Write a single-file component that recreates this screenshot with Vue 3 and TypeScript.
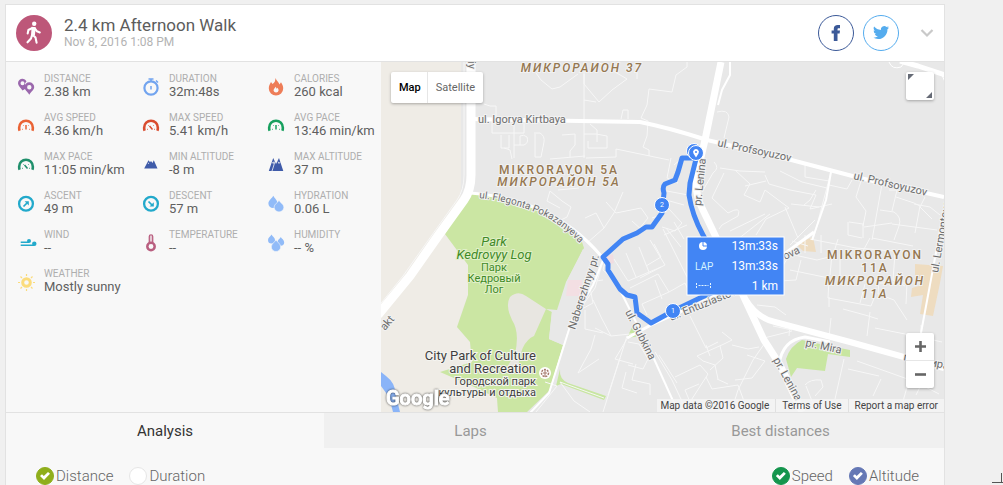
<script setup lang="ts">
import { ref } from 'vue'

interface Stat {
  label: string
  value: string
  icon: string
  color: string
  needle?: string
}

const stats: Stat[] = [
  { label: 'DISTANCE', value: '2.38 km', icon: 'pins', color: '#9b68ad' },
  { label: 'DURATION', value: '32m:48s', icon: 'watch', color: '#72a4ef' },
  { label: 'CALORIES', value: '260 kcal', icon: 'flame', color: '#ee7d58' },
  { label: 'AVG SPEED', value: '4.36 km/h', icon: 'gauge', color: '#ea6335', needle: 'M9 8V12.500' },
  { label: 'MAX SPEED', value: '5.41 km/h', icon: 'gauge', color: '#d94c2f', needle: 'M7.500 9L10.500 12.500' },
  { label: 'AVG PACE', value: '13:46 min/km', icon: 'gauge', color: '#17a05e', needle: 'M9 8V12.500' },
  { label: 'MAX PACE', value: '11:05 min/km', icon: 'gauge', color: '#20906c', needle: 'M7.500 9L10.500 12.500' },
  { label: 'MIN ALTITUDE', value: '-8 m', icon: 'hills', color: '#3f5ba9' },
  { label: 'MAX ALTITUDE', value: '37 m', icon: 'peaks', color: '#3f5ba9' },
  { label: 'ASCENT', value: '49 m', icon: 'up', color: '#22a9cb' },
  { label: 'DESCENT', value: '57 m', icon: 'down', color: '#22a9cb' },
  { label: 'HYDRATION', value: '0.06 L', icon: 'drops', color: '#91bbf8' },
  { label: 'WIND', value: '--', icon: 'wind', color: '#22a9cb' },
  { label: 'TEMPERATURE', value: '--', icon: 'thermo', color: '#b95f80' },
  { label: 'HUMIDITY', value: '-- %', icon: 'humidity', color: '#91bbf8' },
  { label: 'WEATHER', value: 'Mostly sunny', icon: 'sun', color: '#fbdc7c' },
]

const tabs = ['Analysis', 'Laps', 'Best distances']
const activeTab = ref('Analysis')
const mapType = ref('Map')
const axis = ref('distance')
const showSpeed = ref(true)
const showAltitude = ref(true)

const minorRoads = [
  'M484 104L490 106L496 106V119M492 119V133H524V119M501 135V148H509V135M504 148L510 150L512 159M514 121V158M514 145H524Q529 143 527 137Q524 134 520 136V145M534 133H540Q545 136 544 142L541 157H535V134M562 135L575 134V145L570 151V157M550 159L585 156M584 62V158M584 100L596 102',
  'M536 73L541 80L552 89L560 87L578 74M584 74L584 84L599 102L612 90L627 79L598 62M584 134H596M590 124L597 130L597 142M596 134L607 136V148H588V141M586 158L616 157V149L645 155L669 160M637 79V62M687 62V67L676 75L672 92L649 89L647 105L641 118L648 121L647 136L643 147L649 150V156M621 119L623 110L628 110V119',
  'M550 191L562 201L571 207L567 217L559 221M550 191L547 201L560 208M558 190L579 188M585 218L596 213L604 228L614 213L623 192M604 228L587 243M606 202L616 213L641 208L648 218L639 229M632 221L643 231M652 218L661 215L669 209L682 223L675 231L662 227M666 228L681 247M674 222L684 239M671 158L667 178L678 183M667 191L688 195M666 200L684 205M681 159L674 165',
  'M717 112Q728 109 729 117L724 138M714 162Q720 168 713 173L702 192M720 168L740 171L765 172M724 173L712 198L728 213Q742 205 738 216L722 225L719 229M735 170L750 184L744 195L760 202L765 190M745 186L766 181M765 190L789 208L766 219L756 235M730 231L765 214M738 239L770 214M765 175L769 184L790 190L816 195L810 209L832 204M805 165V177L829 181M831 172L813 240M829 185L847 189L852 180M780 171L802 182L827 188M816 190L810 200L804 205M785 207L798 238M791 204L819 207M790 245L815 220',
  'M861 181L856 197L866 211L863 226M882 184L872 240M880 210L894 212Q902 217 899 226L894 240M849 222L863 224V238M848 222V235L862 238M889 190H897L892 211M896 197L914 203L920 206L915 233M914 204L930 207L940 215M892 224L937 230M864 227L892 223M872 238L913 246M925 197L920 207L932 219',
  'M605 265L623 292M614 259L628 281L661 267M626 253L636 277M639 247L649 272M650 240L665 265L640 278M663 229L690 283M630 288L658 274L669 292L642 304M669 292L685 283L690 294M655 280L662 299M642 304L647 315M664 235L687 225M646 266L661 257L654 244M690 316L706 348L718 342M697 356L724 344L732 340L722 332M706 345L710 356M697 356L703 361L715 365L718 379M732 345L748 349L759 347M720 346L723 358L710 370',
  'M627 336L603 412M627 339L615 359L633 364M620 358L608 395M628 342L639 344L648 359L643 369L628 365M626 372L622 388L637 393M636 364L632 380L650 384L650 395M655 352L672 380L687 412M659 355L677 383M675 377L700 365L708 374L690 402L722 411M690 402L685 390L699 384M706 377L712 389L738 385L748 412M717 379L728 384',
  'M604 258L595 288L571 322L550 390M606 258L603 270L614 280M593 300L602 319L611 336L595 328M595 335L591 349L578 373M611 336L640 333M578 373L599 359M580 310L593 303L589 282L603 280M585 310V329L603 333M560 382L604 398M557 386L536 412M545 382L557 386M560 382L574 401L590 412',
  'M773 326L792 330M766 347L764 338L792 331M767 340L753 360L738 390L731 412M747 355L765 361L752 378L735 380M790 270L829 278L828 298L871 306L875 296M832 254L830 275M858 280L879 280L878 294L894 300L907 320M880 283L907 283L906 304M790 254L817 260L833 256M840 254V278M790 325L789 336M780 281L796 280L801 260M829 297L829 307M831 318L829 337M870 312L867 336M843 309L865 315L878 319M857 361L916 382L939 394M844 359L835 399M848 369L879 376M805 385Q810 379 821 380L823 387L815 396M806 386L814 406L822 411M881 379L873 396M921 385L916 395M909 380L900 412M921 325L921 335M875 328L920 337L942 342',
  'M757 305L775 307L786 315M781 269L790 254M805 253V235M821 253V235M834 252L838 239M863 251L870 238M810 239L856 248L894 251M895 253L893 280L905 286M865 284L860 303M792 241L808 246',
]
</script>

<template>
  <main class="page">
    <article class="card">
      <header class="head">
        <div class="avatar">
          <svg width="36" height="36" viewBox="0 0 36 36" aria-hidden="true">
            <circle cx="18.200" cy="8.800" r="2.200" fill="#fff" />
            <path d="M17.600 13L16.400 19.500L19.500 22.500L20.600 27.600M16.200 19.500L15 23.500L11.500 27.300M16.500 13L12.400 15L11.700 18.400M18.800 13.500L21 16.300L23.800 17.400" fill="none" stroke="#fff" stroke-width="2.100" stroke-linecap="round" stroke-linejoin="round" />
            <path d="M15.500 11.700L19.800 12.300L18.900 20.300L15.200 20Z" fill="#fff" />
          </svg>
        </div>
        <div class="heading">
          <h1>2.4 km Afternoon Walk</h1>
          <p>Nov 8, 2016 1:08 PM</p>
        </div>
        <div class="share">
          <a href="#facebook" class="round facebook" aria-label="Share on Facebook">
            <svg width="34" height="34" viewBox="0 0 34 34"><path d="M14.800 25V17.600H12.600V14.400H14.800V12.700C14.800 10.200 16.300 9 18.700 9H21V12.200H19.600C18.800 12.200 18.500 12.600 18.500 13.400V14.400H21L20.600 17.600H18.500V25Z" fill="#3b5998" /></svg>
          </a>
          <a href="#twitter" class="round twitter" aria-label="Share on Twitter">
            <svg width="34" height="34" viewBox="0 0 34 34"><path transform="translate(9 8.500) scale(.67)" d="M23.950 4.570a10 10 0 0 1-2.820.77 4.960 4.960 0 0 0 2.160-2.720c-.95.550-2 .95-3.130 1.180a4.920 4.920 0 0 0-8.380 4.480C7.690 8.090 4.070 6.130 1.640 3.160a4.820 4.820 0 0 0-.67 2.480c0 1.710.87 3.210 2.190 4.100a4.900 4.900 0 0 1-2.230-.62v.06a4.920 4.920 0 0 0 3.950 4.830 5 5 0 0 1-2.210.08 4.940 4.940 0 0 0 4.600 3.420A9.870 9.870 0 0 1 0 19.540a14 14 0 0 0 7.550 2.210c9.050 0 14-7.500 14-13.980 0-.21 0-.42-.02-.63a9.940 9.940 0 0 0 2.460-2.550z" fill="#55acee" /></svg>
          </a>
          <button class="more" aria-label="More options">
            <svg width="14" height="10" viewBox="0 0 14 10"><path d="M1.500 2L7 7.500L12.500 2" fill="none" stroke="#c9c9c9" stroke-width="2.200" /></svg>
          </button>
        </div>
      </header>

      <div class="summary">
        <dl class="stats">
          <div v-for="s in stats" :key="s.label" class="stat">
            <svg class="icon" viewBox="0 0 18 18" aria-hidden="true" :fill="s.color" :stroke="s.color">
              <g v-if="s.icon === 'pins'" stroke="none">
                <path fill-rule="evenodd" d="M5.700 .7A4.500 4.500 0 0 0 1 5.300C1 8 3.500 9.500 5.500 12.500L8 11V5.500L9.500 3.200A4.500 4.500 0 0 0 5.700 .7ZM5.500 3.200A2 2 0 1 1 5.500 7.200A2 2 0 1 1 5.500 3.200Z" />
                <path fill-rule="evenodd" d="M12.300 4.200A4.900 4.900 0 0 0 7.400 9.100C7.400 12 10.300 13.500 12.300 16.700C14.300 13.500 17.200 12 17.200 9.100A4.900 4.900 0 0 0 12.300 4.200ZM12.300 7A2.200 2.200 0 1 1 12.300 11.400A2.200 2.200 0 1 1 12.300 7Z" />
              </g>
              <g v-else-if="s.icon === 'watch'" fill="none">
                <circle cx="9" cy="10" r="6.600" stroke-width="2.200" />
                <path d="M6.500 1H11.500M9 1V3.500M14 2.500L16 4.500M9 8V11.500" stroke-width="1.500" />
              </g>
              <path v-else-if="s.icon === 'flame'" stroke="none" fill-rule="evenodd" d="M8.500 0C9.500 3 12 4.200 12.500 6.500L14 4.200C15.500 6.500 16.300 8.500 16.200 10.500A7.200 7 0 0 1 1.800 10.500C1.600 8 3 6 4 4L5.500 6C8 4.500 8.300 2.500 8.500 0ZM8.800 8.800C8.200 10 6.400 10.800 6.600 12.800A2.600 2.600 0 0 0 11.600 12.600C11.600 11 10.800 10.600 10.300 9.800Q9.800 11 9.500 10.500Z" />
              <g v-else-if="s.icon === 'gauge'" fill="none">
                <path d="M2.600 13.800A7 7 0 0 1 2.200 10.500A6.800 6.800 0 0 1 15.800 10.500A7 7 0 0 1 15.400 13.800" stroke-width="2.600" />
                <path :d="s.needle" stroke-width="1.500" />
                <path d="M5 12.300H6M12 12.300H13M6 8L6.700 8.700M12 8L11.300 8.700" stroke-width="0.800" />
              </g>
              <path v-else-if="s.icon === 'hills'" stroke="none" d="M2.200 12.500L6.500 4.200L8 6.300L9 5L10.500 7L11.800 4.200L15.500 12.500ZM5.800 7.500L6.500 6.500L7.200 8Z" fill-rule="evenodd" />
              <g v-else-if="s.icon === 'peaks'" stroke="none">
                <path d="M1.800 15L6.200 2L9 8L12 2L16.300 15Z" />
                <path d="M5.200 6.200L6.200 7.500L7 5.700L7.500 7L6 12L5 15M11 5.700L12 7.500L13.200 6" fill="none" stroke="#f8f8f8" stroke-width="0.800" />
              </g>
              <g v-else-if="s.icon === 'up' || s.icon === 'down'">
                <circle cx="9" cy="8.800" r="6.900" fill="none" stroke-width="2.300" />
                <path v-if="s.icon === 'up'" d="M6.500 11.500L10 8" stroke-width="1.700" />
                <path v-if="s.icon === 'up'" d="M7.600 6.300H11.800V10.500Z" stroke="none" />
                <path v-if="s.icon === 'down'" d="M6.500 6.500L10 10" stroke-width="1.700" />
                <path v-if="s.icon === 'down'" d="M11.800 7.300V11.600H7.500Z" stroke="none" />
              </g>
              <g v-else-if="s.icon === 'drops'" stroke="none">
                <path d="M6.300 .7C7.200 2.800 10.600 5.200 10.600 8.500A4.600 4.600 0 0 1 1.400 8.500C1.400 5.200 5.400 2.800 6.300 .7Z" />
                <path d="M12 5.200C13 7.600 16.900 9 16.900 12.200A4.900 4.700 0 0 1 7.100 12.200C7.100 9 11 7.600 12 5.200Z" stroke="#f8f8f8" stroke-width="0.600" />
              </g>
              <g v-else-if="s.icon === 'wind'">
                <path d="M3.700 8.200H12M3.700 11.200H17" stroke-width="1.600" fill="none" />
                <circle cx="12" cy="7" r="2" stroke="none" />
                <circle cx="17.300" cy="9.700" r="2.200" stroke="none" />
              </g>
              <g v-else-if="s.icon === 'thermo'" fill="none">
                <path d="M7.300 8.500V2.500A1.700 1.700 0 0 1 10.700 2.500V8.500" stroke-width="1.300" />
                <path d="M9 2V9" stroke-width="1" opacity=".6" />
                <circle cx="9" cy="12.500" r="3.700" stroke-width="2.500" />
              </g>
              <g v-else-if="s.icon === 'humidity'" stroke="none">
                <path d="M4.500 .5C5.200 2.200 8 3.500 8 6A3.500 3.500 0 0 1 1 6C1 3.500 3.800 2.200 4.500 .5ZM13.800 3C14.500 4.500 17.200 6 17.200 8.300A3.400 3.400 0 0 1 10.400 8.300C10.400 6 13.100 4.500 13.800 3Z" />
                <path d="M9 5.800C10 8 13.700 9.800 13.700 12.900A4.700 4.600 0 0 1 4.300 12.900C4.300 9.800 8 8 9 5.800Z" stroke="#f8f8f8" stroke-width="0.600" />
              </g>
              <g v-else fill="none">
                <circle cx="9.500" cy="9.500" r="3.800" stroke-width="3" />
                <path d="M9.500 1V3M9.500 16V18M1 9.500H3M16 9.500H18M3.500 3.500L5 5M14 14L15.500 15.500M15.500 3.500L14 5M5 14L3.500 15.500" stroke-width="1.200" />
              </g>
            </svg>
            <div class="figures">
              <dt>{{ s.label }}</dt>
              <dd>{{ s.value }}</dd>
            </div>
          </div>
        </dl>

        <section class="map" aria-label="Route map">
          <svg class="canvas" viewBox="381 62 563 350" preserveAspectRatio="xMidYMid slice">
            <rect x="381" y="62" width="563" height="350" fill="#e8e8e8" />
            <path d="M381 62H461V185L460 210L445 234L468 265V295L457 327L470 342L472 362L441 372L470 385L497 398L498 412H381Z" fill="#efece6" />
            <path d="M381 372L386 376Q395 383 395 392L400 412H393L389 397L381 386Z" fill="#8ab4f8" />
            <path d="M470 193Q500 196 527 203Q558 215 580 236L584 248L566 282L557 310L546 309L552 312L549 339L563 345L550 390L527 412H498L497 398L470 385L440 372L472 362L470 342L457 327L468 295V265L445 234Z" fill="#cbe6a3" />
            <path d="M546 309L526 296Q518 290 510 297Q505 306 512 320Q520 332 515 354L504 372L518 370Q520 342 534 336Z" fill="#e8e6e1" />
            <path d="M552 310H559L567 281L583 249L600 259L571 320L563 345L549 339Z" fill="#e8e8e8" />
            <path d="M568 280H582V296H566Z" fill="#f3dfe3" />
            <path d="M633 325L636 331L641 336L627 338Z" fill="#c8e6a1" />
            <path d="M560 369Q559 379 568 383L606 396L604 400L561 384L556 386Z" fill="#c8e6a1" />
            <path d="M802 340Q790 346 786 359L791 377L797 368L825 371L828 354L850 357V350L820 344Z" fill="#c8e6a1" />
            <path d="M915 264L943 266L940 283L933 316L920 314L923 295L911 297L912 288L922 285L915 277ZM796 244L813 237L816 252L803 251Z" fill="#eedcc0" />
            <path d="M604 257L613 254L614 263L607 265Z" fill="#f1dde1" />
            <path v-for="(d, i) in minorRoads" :key="i" :d="d" fill="none" stroke="#f7f7f7" stroke-width="1" />
            <g fill="none" stroke="#fff" stroke-linejoin="round">
              <path d="M471 62V175Q471 190 464 200L438 236L410 276L378 315" stroke-width="9" />
              <path d="M470 193Q510 196 540 210Q575 225 602 257" stroke-width="3" />
              <path d="M472 119L580 121L640 122Q670 128 707 140L780 157L860 178L944 197" stroke-width="4" />
              <path d="M721 62L705 140L698 170Q693 190 702 208L727 260Q745 300 764 340L780 365L802 412" stroke-width="7" />
              <path d="M730 62V75L722 90L718 105" stroke-width="2" />
              <path d="M746 300Q757 318 775 322L850 342L944 368" stroke-width="6" />
              <path d="M779 365Q782 340 805 337L830 342M780 363L790 380L797 400" stroke-width="3" />
              <path d="M900 61L918 66L945 75" stroke-width="5" />
              <path d="M889 62Q892 70 901 67L904 63M942 75L945 82" stroke-width="1" />
              <path d="M604 258L650 350L678 412" stroke-width="2" />
              <path d="M627 338L651 325L700 303L755 275Q790 250 814 232" stroke-width="3" />
              <path d="M831 172L826 200L812 240" stroke-width="2" />
              <path d="M943 215L921 333" stroke-width="2" />
              <path d="M604 258L593 285L572 320L549 393L530 413" stroke-width="2" />
            </g>
            <path d="M464 62V175Q464 190 457 200L432 235L403 276L378 307" fill="none" stroke="#f7f7f7" stroke-width="1" />

            <path d="M696 158L682 158L678 172L675 180L665 184Q662 187 664 193L662 213L652 227H646L637 233L623 239L603 257L608 264V270L620 289L627 295L635 297L637 313L651 323L673 311L700 298L730 285L703 235Q692 215 689 195L690 183L696 159" fill="none" stroke="#4285f4" stroke-width="5" stroke-linejoin="round" />

            <g class="street">
              <text x="478" y="123">ul. Igorya Kirtbaya</text>
              <text transform="translate(717 146) rotate(12)">ul. Profsoyuzov</text>
              <text transform="translate(853 179) rotate(13)">ul. Profsoyuzov</text>
              <text transform="translate(701 206) rotate(-84)">pr. Lenina</text>
              <text transform="translate(575 330) rotate(-72)">Naberezhnyy pr.</text>
              <text transform="translate(625 312) rotate(63)">ul. Gubkina</text>
              <text transform="translate(671 321) rotate(-22)">ul. Entuziastov</text>
              <text transform="translate(785 260) rotate(-25)">ova</text>
              <text transform="translate(805 346) rotate(12)">pr. Mira</text>
              <text transform="translate(903 360) rotate(12)">пр. Мира</text>
              <text transform="translate(773 360) rotate(61)">pr. Lenina</text>
              <text transform="translate(385 331) rotate(-50)">akt</text>
              <text transform="translate(938 273) rotate(-80)">ul. Lermontova</text>
              <text transform="translate(468 61) rotate(90)">iy</text>
            </g>
            <path id="flegonta-line" d="M479 198Q514 202 544 216Q566 227 590 254" fill="none" />
            <text class="street small"><textPath href="#flegonta-line">ul. Flegonta Pokazanyeva</textPath></text>

            <g class="district" text-anchor="middle">
              <text x="582" y="72" class="italic">МИКРОРАЙОН 37</text>
              <text x="559" y="174">MIKRORAYON 5A</text>
              <text x="559" y="186" class="italic">МИКРОРАЙОН 5А</text>
              <text x="875" y="259">MIKRORAYON</text>
              <text x="875" y="272">11A</text>
              <text x="875" y="285" class="italic">МИКРОРАЙОН</text>
              <text x="875" y="298" class="italic">11А</text>
            </g>
            <g class="park" text-anchor="middle">
              <text x="494" y="246" class="park-name">Park</text>
              <text x="494" y="259" class="park-name">Kedrovyy Log</text>
              <text x="494" y="271">Парк</text>
              <text x="494" y="282">Кедровый</text>
              <text x="494" y="293">Лог</text>
            </g>
            <g class="place" text-anchor="end">
              <text x="536" y="360">City Park of Culture</text>
              <text x="536" y="373">and Recreation</text>
              <text x="536" y="385" class="local">Городской парк</text>
              <text x="536" y="396" class="local">культуры и отдыха</text>
            </g>
            <circle cx="545" cy="373" r="6" fill="#fff" />
            <circle cx="545" cy="373" r="3.500" fill="none" stroke="#a5796c" stroke-width="1.500" stroke-dasharray="2 1" />
            <path d="M545 370V377M543 373H547" stroke="#a5796c" stroke-width="1" />
            <text x="386" y="405" class="logo">Google</text>

            <g fill="#4285f4" stroke="#fff" stroke-width="1">
              <circle cx="694" cy="151" r="7.500" />
              <circle cx="696" cy="153" r="7.500" />
              <circle cx="662" cy="205" r="7.500" />
              <circle cx="673" cy="311" r="7.500" />
            </g>
            <path d="M696 157.500L693.500 153.500A2.900 2.900 0 1 1 698.500 153.500Z" fill="#fff" />
            <circle cx="696" cy="152" r="1" fill="#4285f4" />
            <g class="marker" text-anchor="middle">
              <text x="662" y="207">2</text>
              <text x="673" y="313">1</text>
            </g>

            <g class="tip">
              <rect x="687" y="237" width="97" height="58" fill="#4285f4" stroke="#fff" />
              <circle cx="703" cy="246" r="4" fill="#fff" />
              <path d="M703 241V246H708" fill="none" stroke="#4285f4" stroke-width="1" />
              <text x="695" y="270" class="lap">LAP</text>
              <path d="M696.500 283V288M710.500 283V288M698.500 285.500H708.500" fill="none" stroke="#e3f4ff" stroke-width="1" stroke-dasharray="2 1" />
              <g text-anchor="end">
                <text x="778" y="250">13m:33s</text>
                <text x="778" y="270">13m:33s</text>
                <text x="778" y="290">1 km</text>
              </g>
            </g>
          </svg>

          <div class="types">
            <button :class="{ on: mapType === 'Map' }" @click="mapType = 'Map'">Map</button>
            <button :class="{ on: mapType === 'Satellite' }" @click="mapType = 'Satellite'">Satellite</button>
          </div>
          <button class="full" aria-label="Full screen">
            <svg width="28" height="28" viewBox="0 0 28 28"><path d="M2 2H8L2 8ZM26 20V26H20Z" fill="#666b76" /></svg>
          </button>
          <div class="zoom">
            <button aria-label="Zoom in"><svg width="28" height="27" viewBox="0 0 28 27"><path d="M9 13.500H20M14.500 8V19" stroke="#666" stroke-width="2.600" /></svg></button>
            <button aria-label="Zoom out"><svg width="28" height="27" viewBox="0 0 28 27"><path d="M9 13.500H20" stroke="#666" stroke-width="2.600" /></svg></button>
          </div>
          <footer class="credits">
            <span>Map data ©2016 Google</span>
            <a href="#terms">Terms of Use</a>
            <a href="#report">Report a map error</a>
          </footer>
        </section>
      </div>

      <nav class="tabs">
        <button v-for="t in tabs" :key="t" :class="{ active: activeTab === t }" @click="activeTab = t">{{ t }}</button>
      </nav>

      <form class="series">
        <label><input v-model="axis" type="radio" name="axis" value="distance" class="olive" />Distance</label>
        <label><input v-model="axis" type="radio" name="axis" value="duration" class="olive" />Duration</label>
        <label class="push"><input v-model="showSpeed" type="checkbox" class="green" />Speed</label>
        <label><input v-model="showAltitude" type="checkbox" class="blue" />Altitude</label>
      </form>
    </article>
    <svg class="grip" width="11" height="12" viewBox="0 0 11 12" aria-hidden="true"><path d="M0 9.500H11M9.500 0V10" fill="none" stroke="#555" stroke-width="1" /></svg>
  </main>
</template>

<style>
body {
  margin: 0;
  background: #f0f0f0;
}
</style>

<style scoped>
* {
  box-sizing: border-box;
}
.page {
  position: relative;
  display: flex;
  min-height: 100vh;
  padding: 4px 58px 0 5px;
  font-family: Roboto, "Liberation Sans", sans-serif;
}
button {
  border: 0;
  padding: 0;
  background: none;
  font-family: inherit;
  cursor: pointer;
}
svg {
  display: block;
}
.card {
  flex: 1;
  min-width: 0;
  background: #f8f8f8;
  border: solid #e2e2e2;
  border-width: 1px 1px 0;
}
.head {
  display: flex;
  align-items: center;
  height: 57px;
  padding: 0 10px;
  background: #fff;
  border-bottom: 1px solid #e2e2e2;
}
.avatar {
  width: 36px;
  height: 36px;
  border-radius: 50%;
  background: #bd5779;
}
.heading {
  margin-left: 12px;
}
h1 {
  margin: 0;
  font-size: 17px;
  line-height: 18px;
  font-weight: 400;
  color: #5c5c5c;
}
.heading p {
  margin: 0;
  font-size: 12px;
  line-height: 17px;
  color: #b3b3b3;
}
.share {
  display: flex;
  align-items: center;
  gap: 9px;
  margin-left: auto;
}
.round {
  width: 36px;
  height: 36px;
  border: 1px solid;
  border-radius: 50%;
}
.facebook {
  border-color: #3b5998;
}
.twitter {
  border-color: #55acee;
}
.more {
  margin-left: 12px;
}
.summary {
  display: flex;
  min-height: 350px;
}
.stats {
  display: grid;
  grid-template-columns: repeat(3, 1fr);
  grid-auto-rows: 39px;
  flex: none;
  width: 375px;
  margin: 0;
  padding-top: 10px;
}
.stat {
  display: flex;
  gap: 9px;
  padding-left: 11px;
}
.icon {
  flex: none;
  width: 18px;
  height: 18px;
  margin-top: 6px;
  overflow: visible;
}
.figures {
  white-space: nowrap;
}
dt {
  font-size: 10px;
  line-height: 14px;
  color: #aeaeae;
}
dd {
  margin: 0;
  font-size: 13px;
  line-height: 11px;
  color: #5f5f5f;
}
.map {
  position: relative;
  flex: 1;
  min-width: 0;
  overflow: hidden;
}
.canvas {
  position: absolute;
  inset: 0;
  width: 100%;
  height: 100%;
}
.street {
  font-size: 11px;
  fill: #6d6d6d;
  stroke: #f2f2f2;
  stroke-width: 2px;
  paint-order: stroke;
}
.small {
  font-size: 10px;
}
.district {
  font-size: 12px;
  font-weight: 500;
  letter-spacing: 2px;
  fill: #957750;
  stroke: #f2f2f2;
  stroke-width: 2px;
  paint-order: stroke;
}
.italic {
  font-style: italic;
}
.park {
  font-size: 11px;
  fill: #3f8a27;
  stroke: #e0f0c8;
  stroke-width: 2px;
  paint-order: stroke;
}
.park-name {
  font-size: 13px;
  font-style: italic;
}
.place {
  font-size: 13px;
  fill: #3f3f3f;
  stroke: #f4f4f0;
  stroke-width: 2px;
  paint-order: stroke;
}
.local {
  font-size: 11px;
}
.logo {
  font-size: 20px;
  font-weight: 500;
  fill: #fff;
  stroke: #fff;
  stroke-width: 1px;
  filter: drop-shadow(0 0 1px rgba(0, 0, 0, 0.7));
}
.marker {
  font-size: 7px;
  fill: #fff;
}
.tip {
  font-size: 12px;
  fill: #fff;
}
.lap {
  font-size: 10px;
  fill: #d5f3ff;
}
.types {
  position: absolute;
  top: 10px;
  left: 10px;
  display: flex;
  height: 31px;
  border-radius: 2px;
  background: #fff;
  box-shadow: 0 1px 3px rgba(0, 0, 0, 0.3);
}
.types button {
  padding: 0 8px;
  font-size: 11px;
  color: #666;
}
.types button:first-child {
  padding-right: 6px;
}
.types button + button {
  border-left: 1px solid #e6e6e6;
}
.types .on {
  font-weight: 500;
  color: #000;
}
.full,
.zoom {
  position: absolute;
  right: 10px;
  width: 28px;
  border-radius: 2px;
  background: #fff;
  box-shadow: 0 1px 3px rgba(0, 0, 0, 0.3);
}
.full {
  top: 10px;
  height: 28px;
}
.zoom {
  bottom: 24px;
}
.zoom button {
  display: block;
}
.zoom button + button {
  border-top: 1px solid #e6e6e6;
}
.credits {
  position: absolute;
  right: 0;
  bottom: 0;
  display: flex;
  font-size: 10px;
  line-height: 13px;
  color: #444;
  background: rgba(245, 245, 245, 0.8);
}
.credits > * {
  padding: 0 6px;
}
.credits > :first-child {
  padding-left: 3px;
}
.credits a {
  border-left: 1px solid #e0e0e0;
  color: inherit;
  text-decoration: none;
}
.tabs {
  display: grid;
  grid-template-columns: 318fr 293fr 327fr;
  border-top: 1px solid #e2e2e2;
}
.tabs button {
  height: 35px;
  font-size: 15px;
  color: #999;
  background: #f0f0f0;
}
.tabs .active {
  color: #333;
  background: #f8f8f8;
}
.series {
  display: flex;
  gap: 16px;
  padding: 19px 25px 0 30px;
}
.series label {
  display: flex;
  align-items: center;
  gap: 2px;
  font-size: 15px;
  font-weight: 300;
  line-height: 18px;
  color: #666;
}
.series .push {
  margin-left: auto;
}
.series input {
  appearance: none;
  display: grid;
  place-items: center;
  width: 18px;
  height: 18px;
  margin: 0;
  border: 1px solid #e6e6e6;
  border-radius: 50%;
  background: #fff;
}
.series input:checked {
  border-color: var(--tint);
  background: var(--tint);
}
.series input:checked::after {
  content: "";
  width: 10px;
  height: 8px;
  background: #fff;
  clip-path: polygon(0 50%, 20% 28%, 38% 50%, 80% 0, 100% 22%, 40% 100%);
}
.olive {
  --tint: #8fae1b;
}
.green {
  --tint: #14954d;
}
.blue {
  --tint: #6578b5;
}
.grip {
  position: absolute;
  right: 0;
  bottom: 0;
}
</style>
